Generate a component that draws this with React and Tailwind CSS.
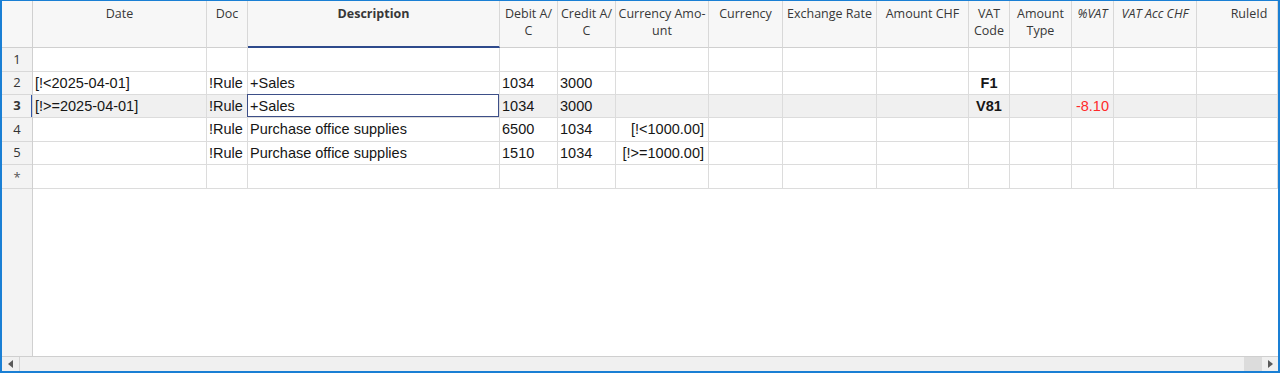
const COLS = [
  { key: 'date', title: 'Date', w: 'w-[174px]', align: 'left' },
  { key: 'doc', title: 'Doc', w: 'w-[41px]', align: 'left' },
  { key: 'desc', title: 'Description', w: 'w-[252px]', align: 'left', bold: true },
  { key: 'debit', title: 'Debit A/\nC', w: 'w-[58px]', align: 'left' },
  { key: 'credit', title: 'Credit A/\nC', w: 'w-[58px]', align: 'left' },
  { key: 'curAmt', title: 'Currency Amo-\nunt', w: 'w-[93px]', align: 'right' },
  { key: 'currency', title: 'Currency', w: 'w-[74px]', align: 'left' },
  { key: 'rate', title: 'Exchange Rate', w: 'w-[94px]', align: 'right' },
  { key: 'amtChf', title: 'Amount CHF', w: 'w-[92px]', align: 'right' },
  { key: 'vat', title: 'VAT\nCode', w: 'w-[41px]', align: 'center' },
  { key: 'amtType', title: 'Amount\nType', w: 'w-[62px]', align: 'left' },
  { key: 'pctVat', title: '%VAT', w: 'w-[42px]', align: 'right', italic: true },
  { key: 'vatAcc', title: 'VAT Acc CHF', w: 'w-[83px]', align: 'right', italic: true },
  { key: 'ruleId', title: 'RuleId', w: 'w-[81px]', align: 'left', pad: true },
];

const ROWS = [
  { num: '1', h: 'h-[24px]' },
  { num: '2', h: 'h-[23px]', date: '[!<2025-04-01]', doc: '!Rule', desc: '+Sales', debit: '1034', credit: '3000', vat: 'F1' },
  { num: '3', h: 'h-[23px]', current: true, date: '[!>=2025-04-01]', doc: '!Rule', desc: '+Sales', debit: '1034', credit: '3000', vat: 'V81', pctVat: '-8.10' },
  { num: '4', h: 'h-[24px]', doc: '!Rule', desc: 'Purchase office supplies', debit: '6500', credit: '1034', curAmt: '[!<1000.00]' },
  { num: '5', h: 'h-[23px]', doc: '!Rule', desc: 'Purchase office supplies', debit: '1510', credit: '1034', curAmt: '[!>=1000.00]' },
  { num: '*', h: 'h-[24px]' },
];

const alignClass = {
  left: 'justify-start pl-[2px]',
  right: 'justify-end pr-[4px]',
  center: 'justify-center',
};

function HeaderCell({ col }) {
  const sel = col.key === 'desc';
  return (
    <div
      className={`${col.w} h-[47px] shrink-0 border-r border-[#d8d8d8] ${sel ? 'border-b-2 border-b-[#2e4a8c]' : 'border-b border-b-[#d0d0d0]'} pt-[4px] text-center whitespace-pre-line leading-[17px] text-[12.5px] text-[#383838] ${col.bold ? 'font-bold text-[#222]' : ''} ${col.italic ? 'italic' : ''} ${col.pad ? 'pl-[24px]' : ''}`}
    >
      {col.title}
    </div>
  );
}

function DataRow({ row }) {
  return (
    <div className={`flex ${row.h} ${row.current ? 'bg-[#f0f0f0]' : 'bg-white'}`}>
      {COLS.map((col) => {
        const val = row[col.key];
        const selected = row.current && col.key === 'desc';
        return (
          <div
            key={col.key}
            className={`${col.w} relative shrink-0 flex items-center border-r border-b border-[#dcdcdc] ${alignClass[col.align]} ${selected ? 'bg-white' : ''}`}
          >
            {selected && <div className="absolute -left-px -top-px right-0 bottom-0 border border-[#3d4f88]" />}
            {val && (
              <span
                className={`relative text-[14.5px] leading-none whitespace-nowrap ${col.key === 'pctVat' ? 'text-[#ff2a2a]' : 'text-[#161616]'} ${col.key === 'vat' ? 'font-bold text-[#333]' : ''}`}
                style={{ fontFamily: '"Liberation Sans", Arial, sans-serif' }}
              >
                {val}
              </span>
            )}
          </div>
        );
      })}
    </div>
  );
}

function ScrollBar() {
  return (
    <div className="h-[15px] flex border-t border-[#cfcfcf] bg-[#f0f0f0]">
      <div className="w-[18px] flex items-center justify-center border-r border-[#d4d4d4]">
        <svg width="5" height="8" viewBox="0 0 5 8"><path d="M5 0 L0 4 L5 8 Z" fill="#5a5a5a" /></svg>
      </div>
      <div className="flex-1" />
      <div className="w-[18px] bg-[#dcdcdc]" />
      <div className="w-[16px] flex items-center justify-center">
        <svg width="5" height="8" viewBox="0 0 5 8"><path d="M0 0 L5 4 L0 8 Z" fill="#5a5a5a" /></svg>
      </div>
    </div>
  );
}

export default function App() {
  return (
    <div
      className="w-[1280px] h-[373px] flex flex-col bg-white border-t border-b-2 border-l-2 border-r-2 border-[#1a7fd4] overflow-hidden"
      style={{ fontFamily: '"Open Sans", "Noto Sans", sans-serif' }}
    >
      <div className="flex-1 flex min-h-0">
        {/* row numbers */}
        <div className="w-[31px] shrink-0 flex flex-col bg-[#f3f3f3] border-r border-[#d0d0d0]">
          <div className="h-[47px] border-b border-[#d0d0d0] bg-[#f7f7f7]" />
          {ROWS.map((row) => (
            <div
              key={row.num}
              className={`${row.h} flex items-center justify-center border-b border-[#d8d8d8] text-[13px] ${row.num === '*' ? 'text-[9px] text-[#555] pt-[2px]' : 'text-[#333]'} ${row.current ? 'font-bold shadow-[inset_-1px_0_0_#2f55a8]' : ''}`}
            >
              {row.num}
            </div>
          ))}
        </div>
        {/* grid */}
        <div className="flex-1 flex flex-col">
          <div className="flex bg-[#f7f7f7]">
            {COLS.map((col) => (
              <HeaderCell key={col.key} col={col} />
            ))}
          </div>
          {ROWS.map((row) => (
            <DataRow key={row.num} row={row} />
          ))}
        </div>
      </div>
      <ScrollBar />
    </div>
  );
}
